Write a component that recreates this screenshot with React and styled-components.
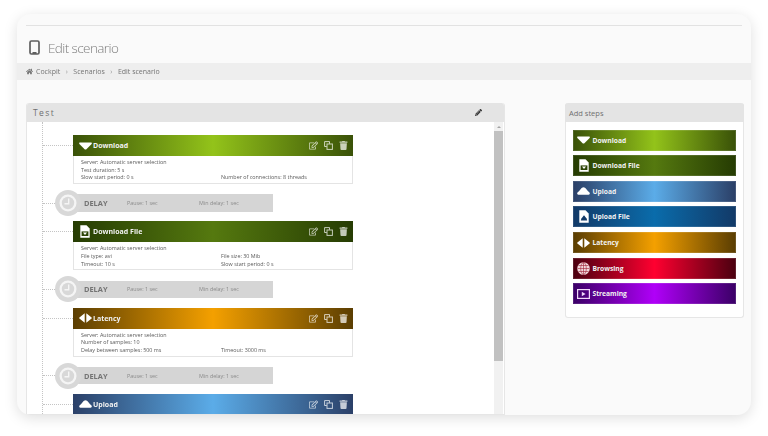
import React from "react";
import styled, { createGlobalStyle } from "styled-components";
import { FaHome, FaPencilAlt, FaRegEdit, FaTrash } from "react-icons/fa";

const Global = createGlobalStyle`
  html, body { margin: 0; padding: 0; background: #fff; }
  body { font-family: "Open Sans", "Liberation Sans", sans-serif; width: 768px; height: 436px; overflow: hidden; }
  * { box-sizing: border-box; }
`;

const Page = styled.div`
  padding: 14px 17px 21px;
  height: 436px;
`;
const Frame = styled.div`
  height: 401px;
  background: #fafafa;
  border-radius: 14px;
  box-shadow: 0 3px 14px rgba(0, 0, 0, 0.13);
  overflow: hidden;
  display: flex;
  flex-direction: column;
  filter: blur(0.35px);
`;
const TopRule = styled.div`
  height: 1px;
  margin: 11px 9px 0;
  background: #e2e2e2;
`;
const TitleRow = styled.div`
  height: 37px;
  padding: 6px 0 0 12px;
  display: flex;
  align-items: center;
  gap: 8px;
`;
const Title = styled.h1`
  margin: 0;
  font-size: 13.5px;
  font-weight: 300;
  letter-spacing: -0.6px;
  color: #7d7d7d;
`;
const Crumbs = styled.div`
  height: 17px;
  background: #eeeeee;
  padding-left: 9px;
  display: flex;
  align-items: center;
  gap: 3px;
  font-size: 7px;
  color: #757575;
`;
const CrumbSep = styled.span`
  margin: 0 2.5px;
  color: #999;
`;
const Columns = styled.div`
  flex: 1;
  min-height: 0;
  padding: 23px 7px 0 9px;
  display: flex;
  align-items: flex-start;
  gap: 60px;
`;
const Panel = styled.section`
  background: #fff;
  border: 1px solid #e6e6e6;
  border-top: 0;
  border-radius: 3px 3px 0 0;
  display: flex;
  flex-direction: column;
`;
const MainPanel = styled(Panel)`
  width: 479px;
  height: 312px;
  overflow: hidden;
`;
const SidePanel = styled(Panel)`
  width: 179px;
  height: 215px;
  border-radius: 3px;
`;
const PanelHead = styled.header`
  flex: none;
  height: 19px;
  margin: 0 -1px;
  padding: 0 23px 0 7px;
  background: #e4e4e4;
  border-radius: 3px 3px 0 0;
  display: flex;
  align-items: center;
  justify-content: space-between;
  color: #707070;
`;
const TestName = styled.span`
  font-size: 8.5px;
  letter-spacing: 1.4px;
`;
const AddTitle = styled.span`
  font-size: 7.5px;
  margin-left: -3px;
`;
const PanelBody = styled.div`
  flex: 1;
  min-height: 0;
  display: flex;
`;
const Timeline = styled.div`
  flex: 1;
  margin-left: 15px;
  padding-top: 13px;
  border-left: 1px dotted #c4c4c4;
  display: flex;
  flex-direction: column;
  align-items: flex-start;
`;
const CardRow = styled.div`
  display: flex;
  align-items: flex-start;
  margin-bottom: 10.4px;
`;
const CardStub = styled.div`
  width: 30px;
  margin-top: 10px;
  border-top: 1px dotted #c4c4c4;
`;
const Card = styled.article`
  width: 280px;
  height: 49px;
  background: #fff;
  border: 1px solid #e4e4e4;
  border-top: 0;
`;
const StepHead = styled.div`
  height: 21px;
  margin: 0 -1px;
  padding: 0 5px;
  background: linear-gradient(to right, ${p => p.$a}, ${p => p.$b} 50%, ${p => p.$a});
  display: flex;
  align-items: center;
  gap: 1px;
  color: #fff;
`;
const IconSlot = styled.span`
  width: 14px;
  height: 14px;
  flex: none;
  display: flex;
  align-items: center;
  justify-content: center;
`;
const StepName = styled.span`
  flex: 1;
  font-size: 7px;
  font-weight: 700;
  color: #f2f2f2;
`;
const ButtonName = styled(StepName)`
  font-size: 6.7px;
`;
const Actions = styled.span`
  display: flex;
  align-items: center;
  gap: 6px;
  font-size: 9px;
  color: rgba(255, 255, 255, 0.72);
`;
const Details = styled.div`
  padding: 3px 7px 0;
  display: grid;
  grid-template-columns: 140px 1fr;
  grid-auto-rows: 7.7px;
  font-size: 5.4px;
  line-height: 7.7px;
  color: #5a5a5a;
`;
const DelayRow = styled.div`
  display: flex;
  align-items: center;
  height: 17.5px;
  margin-bottom: 9.4px;
`;
const DelayStub = styled.div`
  width: 12px;
  border-top: 1px dotted #c4c4c4;
`;
const ClockDisc = styled.div`
  width: 26px;
  height: 26px;
  flex: none;
  margin-right: -13px;
  z-index: 1;
  border-radius: 50%;
  background: #d8d8d8;
  display: flex;
  align-items: center;
  justify-content: center;
`;
const DelayBar = styled.div`
  width: 205px;
  height: 100%;
  background: #d5d5d5;
  padding-left: 16px;
  display: flex;
  align-items: center;
`;
const DelayLabel = styled.span`
  width: 43px;
  font-size: 7.4px;
  font-weight: 700;
  color: #747474;
`;
const DelayNote = styled.span`
  width: 72px;
  font-size: 5.4px;
  color: #8a8a8a;
`;
const Scrollbar = styled.div`
  flex: none;
  width: 9px;
  margin-right: 1px;
  background: #f1f1f1;
  display: flex;
  flex-direction: column;
  align-items: center;
`;
const ScrollArrow = styled.div`
  margin-top: 4px;
  width: 0;
  height: 0;
  border: 2px solid transparent;
  border-top: 0;
  border-bottom: 2.5px solid #a3a3a3;
`;
const ScrollThumb = styled.div`
  width: 100%;
  height: 230px;
  margin-top: 3px;
  background: #c1c1c1;
`;
const StepList = styled.div`
  padding: 7.5px 7px 0 6.5px;
  display: flex;
  flex-direction: column;
  gap: 4.67px;
`;
const StepButton = styled.div`
  height: 21px;
  padding: 0 3px;
  background: linear-gradient(to right, ${p => p.$a}, ${p => p.$b} 50%, ${p => p.$a});
  display: flex;
  align-items: center;
  gap: 2px;
  border: 1px solid rgba(255, 255, 255, 0.12);
`;

const Arrow = ({ up }) => (
  <svg width="13" height="8" viewBox="0 0 13 8" fill="#fff">
    {up
      ? <path d="M6.5 0.3 C7.6 0.3 8.4 1 9.2 2 C10.2 3.3 11.5 4.6 12.5 5.6 C13.1 6.5 12.8 7.7 11.6 7.7 L1.4 7.7 C0.2 7.7 -0.1 6.5 0.5 5.6 C1.5 4.6 2.8 3.3 3.8 2 C4.6 1 5.4 0.3 6.5 0.3Z" />
      : <path d="M0.8 0.4 L12.2 0.4 C13 0.4 13.1 1.3 12.6 1.9 L7.4 7.2 C6.9 7.7 6.1 7.7 5.6 7.2 L0.4 1.9 C-0.1 1.3 0 0.4 0.8 0.4Z" />}
  </svg>
);
const FileIcon = ({ up, bg }) => (
  <svg width="10" height="13" viewBox="0 0 10 13">
    <path d="M0.3 0.3 H6.5 L9.7 3.5 V12.7 H0.3Z" fill="#fff" />
    {up
      ? <path d="M5 5.3 L7.6 8.6 L8.2 10.6 H1.8 L2.4 8.6Z" fill={bg} />
      : <>
          <rect x="1.6" y="6.4" width="6.8" height="4.6" fill={bg} />
          <path d="M3 7.6 H7 L5 10Z" fill="#fff" />
        </>}
  </svg>
);
const LatencyIcon = () => (
  <svg width="13" height="10" viewBox="0 0 13 10" fill="#fff">
    <path d="M5.7 0.2 V9.8 L0.4 5.6 C0 5.3 0 4.7 0.4 4.4Z" />
    <path d="M7.3 0.2 V9.8 L12.6 5.6 C13 5.3 13 4.7 12.6 4.4Z" />
  </svg>
);
const GlobeIcon = () => (
  <svg width="13" height="13" viewBox="0 0 13 13" fill="none" stroke="#a02036" strokeWidth="0.6">
    <circle cx="6.5" cy="6.5" r="6.3" fill="#f0d8dc" stroke="none" />
    <ellipse cx="6.5" cy="6.5" rx="2.8" ry="6" />
    <path d="M6.5 0.5 V12.5 M0.5 6.5 H12.5 M1.4 3.5 H11.6 M1.4 9.5 H11.6" />
  </svg>
);
const StreamIcon = () => (
  <svg width="13" height="10" viewBox="0 0 13 10" fill="none" stroke="#f0d8fa">
    <rect x="0.6" y="0.6" width="11.8" height="8.8" strokeWidth="1.2" />
    <path d="M4.8 2.8 L8.6 5 L4.8 7.2Z" fill="#f0d8fa" stroke="none" />
  </svg>
);
const CloneIcon = () => (
  <svg width="9" height="9" viewBox="0 0 9 9" fill="none" stroke="currentColor" strokeWidth="1">
    <path d="M5.5 2.7 V0.6 H0.6 V5.5 H2.7" />
    <rect x="3" y="3" width="5.4" height="5.4" />
  </svg>
);
const Clock = () => (
  <svg width="18" height="18" viewBox="0 0 18 18">
    <circle cx="9" cy="9" r="8.5" fill="#f5f5f5" />
    <circle cx="9" cy="9" r="6.2" fill="#d8d8d8" />
    <path d="M9.7 4.5 V9.8 H5.5" fill="none" stroke="#f5f5f5" strokeWidth="1.4" />
  </svg>
);
const Tablet = () => (
  <svg width="11" height="15" viewBox="0 0 11 15" fill="none">
    <rect x="1" y="1" width="9" height="13" rx="1.4" stroke="#5f5f5f" strokeWidth="1.7" />
    <rect x="3.5" y="12" width="4" height="2" fill="#5f5f5f" />
  </svg>
);

const palette = {
  download: ["#3a5208", "#93c31a"],
  downloadFile: ["#263c03", "#55790f"],
  upload: ["#2b4068", "#5bace8"],
  uploadFile: ["#123a68", "#0a6cab"],
  latency: ["#5b3e02", "#f4a000"],
  browsing: ["#4c0010", "#ff0030"],
  streaming: ["#3c0068", "#b000f8"],
};

const icons = {
  download: <Arrow />,
  downloadFile: <FileIcon bg="#2d4406" />,
  upload: <Arrow up />,
  uploadFile: <FileIcon up bg="#123a68" />,
  latency: <LatencyIcon />,
  browsing: <GlobeIcon />,
  streaming: <StreamIcon />,
};

const addSteps = [
  ["download", "Download"],
  ["downloadFile", "Download File"],
  ["upload", "Upload"],
  ["uploadFile", "Upload File"],
  ["latency", "Latency"],
  ["browsing", "Browsing"],
  ["streaming", "Streaming"],
];

const scenario = [
  { kind: "download", name: "Download", rows: [
    ["Server: Automatic server selection", ""],
    ["Test duration: 5 s", ""],
    ["Slow start period: 0 s", "Number of connections: 8 threads"],
  ]},
  { kind: "downloadFile", name: "Download File", rows: [
    ["Server: Automatic server selection", ""],
    ["File type: avi", "File size: 30 Mib"],
    ["Timeout: 10 s", "Slow start period: 0 s"],
  ]},
  { kind: "latency", name: "Latency", rows: [
    ["Server: Automatic server selection", ""],
    ["Number of samples: 10", ""],
    ["Delay between samples: 500 ms", "Timeout: 3000 ms"],
  ]},
  { kind: "upload", name: "Upload", rows: [] },
];

function Step({ step, last }) {
  const [a, b] = palette[step.kind];
  return (
    <>
      <CardRow>
        <CardStub />
        <Card>
          <StepHead $a={a} $b={b}>
            <IconSlot>{icons[step.kind]}</IconSlot>
            <StepName>{step.name}</StepName>
            <Actions><FaRegEdit /><CloneIcon /><FaTrash /></Actions>
          </StepHead>
          <Details>
            {step.rows.flat().map((t, i) => <span key={i}>{t}</span>)}
          </Details>
        </Card>
      </CardRow>
      {!last && (
        <DelayRow>
          <DelayStub />
          <ClockDisc><Clock /></ClockDisc>
          <DelayBar>
            <DelayLabel>DELAY</DelayLabel>
            <DelayNote>Pause: 1 sec</DelayNote>
            <DelayNote>Min delay: 1 sec</DelayNote>
          </DelayBar>
        </DelayRow>
      )}
    </>
  );
}

export default function App() {
  return (
    <Page>
      <Global />
      <Frame>
        <TopRule />
        <TitleRow>
          <Tablet />
          <Title>Edit scenario</Title>
        </TitleRow>
        <Crumbs>
          <FaHome size={7} />
          <span>Cockpit</span>
          <CrumbSep>›</CrumbSep>
          <span>Scenarios</span>
          <CrumbSep>›</CrumbSep>
          <span>Edit scenario</span>
        </Crumbs>
        <Columns>
          <MainPanel>
            <PanelHead>
              <TestName>Test</TestName>
              <FaPencilAlt size={7} color="#333" />
            </PanelHead>
            <PanelBody>
              <Timeline>
                {scenario.map((s, i) => (
                  <Step key={s.name} step={s} last={i === scenario.length - 1} />
                ))}
              </Timeline>
              <Scrollbar>
                <ScrollArrow />
                <ScrollThumb />
              </Scrollbar>
            </PanelBody>
          </MainPanel>
          <SidePanel>
            <PanelHead>
              <AddTitle>Add steps</AddTitle>
            </PanelHead>
            <StepList>
              {addSteps.map(([k, n]) => (
                <StepButton key={k} $a={palette[k][0]} $b={palette[k][1]}>
                  <IconSlot>{icons[k]}</IconSlot>
                  <ButtonName>{n}</ButtonName>
                </StepButton>
              ))}
            </StepList>
          </SidePanel>
        </Columns>
      </Frame>
    </Page>
  );
}
